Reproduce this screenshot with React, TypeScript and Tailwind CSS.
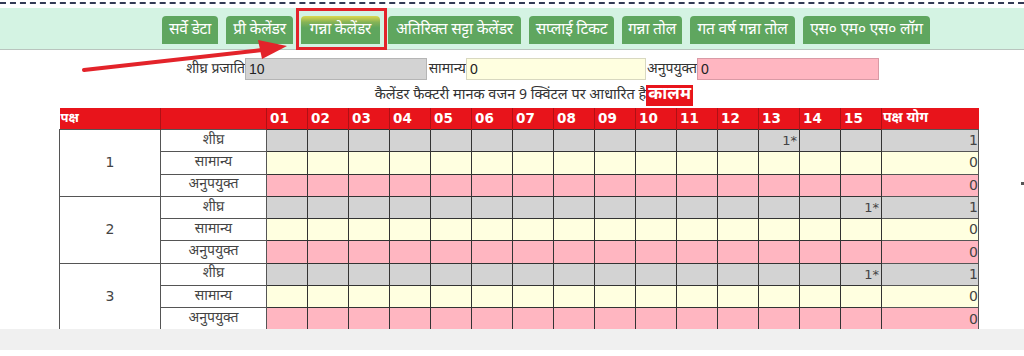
import React from "react";

const deva = "font-['Noto_Sans_Devanagari','Lohit_Devanagari','Noto_Sans',sans-serif]";

const tabs = [
  { label: "सर्वे डेटा", w: "w-[56px]" },
  { label: "प्री केलेंडर", w: "w-[67px]" },
  { label: "गन्ना केलेंडर", w: "w-[79px]", active: true },
  { label: "अतिरिक्त सट्टा केलेंडर", w: "w-[133px]" },
  { label: "सप्लाई टिकट", w: "w-[85px]" },
  { label: "गन्ना तोल", w: "w-[60px]" },
  { label: "गत वर्ष गन्ना तोल", w: "w-[105px]" },
  { label: "एस० एम० एस० लॉग", w: "w-[127px]" },
];

const days = ["01", "02", "03", "04", "05", "06", "07", "08", "09", "10", "11", "12", "13", "14", "15"];

const kinds = [
  { label: "शीघ्र", bg: "bg-[#d3d3d3]" },
  { label: "सामान्य", bg: "bg-[#ffffe0]" },
  { label: "अनुपयुक्त", bg: "bg-[#ffb6c1]" },
];

// which day column holds the "1*" for each paksha's शीघ्र row
const marks: Record<number, number> = { 1: 12, 2: 14, 3: 14 };

function Tab({ label, w, active }: { label: string; w: string; active?: boolean }) {
  return (
    <div
      className={`relative flex h-[28px] ${w} items-center justify-center rounded-t-[4px] text-[15.5px] leading-none tracking-[-0.2px] text-white ${
        active
          ? "bg-[linear-gradient(to_bottom,#dcd84c_0%,#86b356_22%,#5fa65d_42%)]"
          : "bg-[#5fa65f]"
      }`}
    >
      <span className="whitespace-nowrap pt-[1px]">{label}</span>
      {active && (
        <div className="pointer-events-none absolute -bottom-[6px] -left-[5px] -right-[7px] -top-[8px] border-[3px] border-[#e3232a]" />
      )}
    </div>
  );
}

export default function App() {
  return (
    <div className={`relative h-[356px] w-[1024px] overflow-hidden bg-white ${deva}`}>
      <div className="h-[8px] pt-[2px]">
        <div className="border-t-2 border-dashed border-[#333a55]" />
      </div>

      <div className="flex h-[42px] gap-[8px] border-b border-[#b9c4be] bg-[#d4f3e3] pl-[162px] pt-[8px]">
        {tabs.map((t) => (
          <Tab key={t.label} {...t} />
        ))}
      </div>

      <div className="mt-[8px] flex h-[22px] items-center pl-[165px] text-[14px] text-[#333]">
        <span className="w-[80px] whitespace-nowrap text-right">शीघ्र प्रजाति</span>
        <div className="flex h-[22px] w-[182px] items-center border border-[#b5b5b5] bg-[#d3d3d3] pl-[3px] font-['Liberation_Sans',sans-serif] text-[14px] text-[#222]">
          10
        </div>
        <span className="w-[39px] whitespace-nowrap text-right">सामान्य</span>
        <div className="flex h-[22px] w-[180px] items-center border border-[#d8d8c0] bg-[#ffffe0] pl-[3px] font-['Liberation_Sans',sans-serif] text-[14px] text-[#222]">
          0
        </div>
        <span className="w-[51px] whitespace-nowrap text-right">अनुपयुक्त</span>
        <div className="flex h-[22px] w-[182px] items-center border border-[#d99aa5] bg-[#ffb6c1] pl-[3px] font-['Liberation_Sans',sans-serif] text-[14px] text-[#222]">
          0
        </div>
      </div>

      <div className="mt-[5px] flex h-[21px] items-center justify-end pr-[331px] text-[14.5px] text-[#333]">
        <span className="whitespace-nowrap">कैलेंडर फैक्टरी मानक वजन 9 क्विंटल पर आधारित है</span>
        <span className="flex h-[21px] items-center bg-[#e8141b] px-[2px] text-[17px] font-bold text-white">कालम</span>
      </div>

      <div className="ml-[59px] mt-[2px] h-[221px] w-[920px] overflow-hidden">
        <table className="w-[919px] table-fixed border-collapse text-[14px] text-[#444]">
          <colgroup>
            <col className="w-[101px]" />
            <col className="w-[106px]" />
            {days.map((d) => (
              <col key={d} className="w-[41px]" />
            ))}
            <col className="w-[97px]" />
          </colgroup>
          <thead>
            <tr className="h-[19px] bg-[#e8141b] text-left text-white">
              <th className="px-[1px] text-[13px] font-bold">पक्ष</th>
              <th className="border-l border-[#b01015]" />
              {days.map((d) => (
                <th
                  key={d}
                  className="border-l border-[#b01015] px-[3px] font-['DejaVu_Sans',sans-serif] text-[13.5px] font-bold"
                >
                  {d}
                </th>
              ))}
              <th className="border-l border-[#b01015] px-[1px] text-[14px] font-bold">पक्ष योग</th>
            </tr>
          </thead>
          <tbody>
            {[1, 2, 3].map((p) =>
              kinds.map((k, ki) => (
                <tr key={`${p}-${k.label}`} className="h-[22.3px]">
                  {ki === 0 && (
                    <td rowSpan={3} className="border border-[#555] bg-white text-center font-['DejaVu_Sans',sans-serif] text-[14px] text-[#444]">
                      {p}
                    </td>
                  )}
                  <td className="border border-[#555] bg-white text-center leading-none">{k.label}</td>
                  {days.map((d, di) => (
                    <td
                      key={d}
                      className={`border border-[#333] ${k.bg} pr-[2px] text-right font-['DejaVu_Sans',sans-serif] text-[13px]`}
                    >
                      {ki === 0 && marks[p] === di ? "1*" : ""}
                    </td>
                  ))}
                  <td className={`border border-[#555] ${k.bg} text-right font-['DejaVu_Sans',sans-serif] text-[14px]`}>
                    {ki === 0 ? "1" : "0"}
                  </td>
                </tr>
              ))
            )}
          </tbody>
        </table>
      </div>

      <div className="h-[21px] bg-[#f0f0f0]" />

      <span className="absolute left-[1021px] top-[182px] h-[3px] w-[3px] bg-[#555]" />

      <svg className="pointer-events-none absolute left-0 top-0" width="1024" height="100">
        <line x1="84" y1="70" x2="262" y2="50" stroke="#e3232a" strokeWidth="4" strokeLinecap="round" />
        <polygon points="287,46 258,40 262,59" fill="#e3232a" />
      </svg>
    </div>
  );
}
